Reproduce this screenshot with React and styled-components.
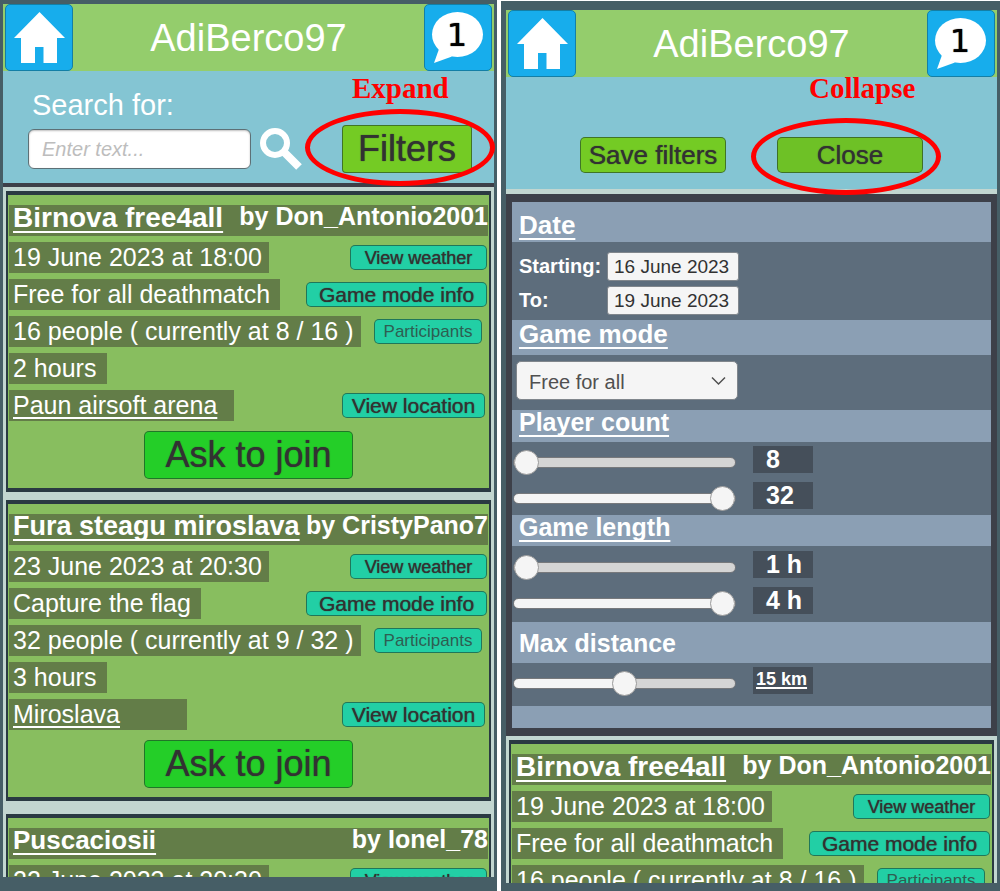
import React, { useState } from "react";
import styled, { createGlobalStyle } from "styled-components";

const GlobalStyle = createGlobalStyle`
  *, *::before, *::after { box-sizing: border-box; }
  body {
    margin: 0;
    background: #ffffff;
    font-family: "Liberation Sans", Arial, sans-serif;
    color: #ffffff;
  }
  button, input, select { font-family: inherit; margin: 0; }
`;

/* ---------- page and phone frames ---------- */

const Page = styled.main`
  display: grid;
  grid-template-columns: 497fr 499fr;
  gap: 4px;
  height: 100vh;
  overflow: hidden;
`;

const Phone = styled.section`
  display: flex;
  flex-direction: column;
  min-width: 0;
  min-height: 0;
  margin-top: ${(p) => p.$top || 0}px;
  padding: ${(p) => p.$frame};
  background: #465e66;
`;

const Header = styled.header`
  flex: none;
  display: flex;
  align-items: center;
  justify-content: space-between;
  height: 67px;
  padding: 0 2px;
  background: #94cd6c;
`;

const UserName = styled.h1`
  margin: 0;
  font-size: 38px;
  font-weight: 400;
  line-height: 44px;
`;

const IconButton = styled.button`
  width: 68px;
  height: 67px;
  padding: 0;
  border: 1px solid #137fa6;
  border-radius: 5px;
  background: #17adec;
  svg { display: block; }
`;

const Badge = styled.text`
  font-family: "DejaVu Sans", sans-serif;
  font-size: 32px;
  fill: #000000;
  text-shadow: 0 0 1px #000000;
`;

/* ---------- buttons ---------- */

const Button = styled.button`
  display: block;
  flex: none;
  width: ${(p) => p.$w}px;
  height: ${(p) => p.$h}px;
  margin-right: ${(p) => p.$inset || 0}px;
  padding: 0;
  border: 1px solid rgba(30, 60, 40, 0.6);
  border-radius: ${(p) => p.$r || 5}px;
  background: ${(p) => p.$bg};
  color: ${(p) => (p.$light ? "#2e5e52" : "#323232")};
  font-size: ${(p) => p.$size}px;
  line-height: 1;
  white-space: nowrap;
  text-shadow: ${(p) => (p.$light ? "none" : "0 0 1px currentColor")};
`;

const Callout = styled.div`
  position: relative;
  flex: none;
`;

const Ring = styled.span`
  position: absolute;
  z-index: 2;
  left: ${(p) => p.$x}px;
  top: ${(p) => p.$y}px;
  width: 190px;
  height: 77px;
  border: 5px solid #ff0000;
  border-radius: 50%;
  pointer-events: none;
`;

const Note = styled.span`
  position: absolute;
  z-index: 2;
  left: ${(p) => p.$x}px;
  top: ${(p) => p.$y}px;
  color: #ff0000;
  font: 700 29px/32px "Liberation Serif", "Times New Roman", serif;
`;

/* ---------- search and filter bars ---------- */

const SearchArea = styled.form`
  flex: none;
  padding: 18px 22px 10px 25px;
  background: #84c5d3;
`;

const SearchLabel = styled.label`
  display: block;
  margin-bottom: 4px;
  padding-left: 4px;
  font-size: 29px;
  line-height: 32px;
`;

const SearchRow = styled.div`
  display: flex;
  align-items: center;
`;

const SearchInput = styled.input`
  flex: 1;
  min-width: 0;
  height: 40px;
  padding: 0 13px;
  border: 1px solid #5d7076;
  border-radius: 6px;
  background: #ffffff;
  box-shadow: inset 0 1px 2px rgba(0, 0, 0, 0.25);
  color: #323232;
  font-size: 20px;
  &::placeholder { color: #bdbdbd; font-style: italic; opacity: 1; }
`;

const SearchButton = styled.button`
  width: 42px;
  height: 42px;
  margin: 0 40px 0 9px;
  padding: 0;
  border: 0;
  background: none;
  svg { display: block; }
`;

const FilterBar = styled.div`
  flex: none;
  display: flex;
  justify-content: center;
  gap: 51px;
  padding: 60px 0 16px;
  background: #84c5d3;
`;

const Divider = styled.div`
  flex: none;
  height: ${(p) => p.$h}px;
  background: ${(p) => p.$bg};
`;

/* ---------- game cards ---------- */

const GameList = styled.div`
  flex: 1;
  min-height: 0;
  overflow: hidden;
  padding: 4px 3px 0;
  background: #c2d6d0;
`;

const Card = styled.article`
  display: flex;
  flex-direction: column;
  gap: 6px;
  margin-bottom: ${(p) => p.$after}px;
  padding: 10px 1px 9px;
  border: solid #2a3a42;
  border-width: 4px 2px;
  background: #88be5f;
`;

const TitleBar = styled.div`
  display: flex;
  justify-content: space-between;
  height: 31px;
  padding-left: 4px;
  background: #637d48;
  font-weight: 700;
  white-space: nowrap;
`;

const Title = styled.h2`
  margin: 0;
  font-size: ${(p) => p.$size}px;
  line-height: 25px;
  text-decoration: underline 2px;
  text-underline-offset: 4px;
  text-decoration-skip-ink: none;
`;

const Host = styled.span`
  font-size: 25px;
  line-height: 23px;
`;

const Row = styled.div`
  display: flex;
  align-items: center;
  justify-content: space-between;
  height: 31px;
`;

const Line = styled.span`
  width: ${(p) => p.$w}px;
  height: 31px;
  padding-left: 4px;
  background: #637d48;
  font-size: 25px;
  line-height: 31px;
  white-space: nowrap;
  text-decoration: ${(p) => (p.$link ? "underline 2px" : "none")};
  text-underline-offset: 3px;
  text-decoration-skip-ink: none;
`;

const JoinRow = styled.div`
  display: flex;
  justify-content: center;
  padding-top: 4px;
`;

/* ---------- filter panel ---------- */

const Panel = styled.form`
  flex: none;
  border: solid #3d4049;
  border-width: 8px 6px;
  padding-bottom: 22px;
  background: #8b9fb4;
`;

const Heading = styled.h2`
  margin: 0;
  padding: ${(p) => p.$top}px 7px ${(p) => p.$bottom}px;
  font-size: ${(p) => (p.$large ? 26 : 25)}px;
  line-height: 24px;
  text-decoration: ${(p) => (p.$plain ? "none" : "underline 2px")};
  text-underline-offset: 4px;
  text-decoration-skip-ink: none;
`;

const Body = styled.div`
  display: flex;
  flex-direction: column;
  align-items: flex-start;
  gap: ${(p) => p.$gap || 7}px;
  padding: ${(p) => p.$pad};
  background: #5d6d7c;
`;

const DateRow = styled.div`
  display: grid;
  grid-template-columns: 88px 132px;
  align-items: center;
`;

const DateLabel = styled.label`
  font-size: 20px;
  font-weight: 700;
  line-height: 27px;
`;

const DateInput = styled.input`
  width: 100%;
  height: 29px;
  padding: 0 6px;
  border: 1px solid #80868c;
  border-radius: 3px;
  background: #f5f5f5;
  color: #323232;
  font-size: 19px;
`;

const SelectBox = styled.div`
  position: relative;
  width: 222px;
  svg {
    position: absolute;
    right: 12px;
    top: 15px;
    pointer-events: none;
  }
`;

const Select = styled.select`
  display: block;
  width: 100%;
  height: 39px;
  padding: 2px 12px 0;
  appearance: none;
  border: 1px solid #80868c;
  border-radius: 5px;
  background: #f5f5f5;
  color: #505050;
  font-size: 20px;
`;

const SliderRow = styled.div`
  display: flex;
  align-items: flex-start;
  gap: 17px;
  height: 29px;
`;

const Slider = styled.input.attrs({ type: "range" })`
  appearance: none;
  width: 223px;
  height: 25px;
  margin-top: 4px;
  background: none;
  &::-webkit-slider-runnable-track {
    height: 11px;
    border: 1px solid #77797c;
    border-radius: 6px;
    background: linear-gradient(
      to right,
      #f5f5f5 ${(p) => p.$fill}%,
      #d5d5d5 ${(p) => p.$fill}%
    );
  }
  &::-webkit-slider-thumb {
    appearance: none;
    width: 25px;
    height: 25px;
    margin-top: -8px;
    border: 1px solid #9a9a9a;
    border-radius: 50%;
    background: #f5f5f5;
  }
`;

const Value = styled.output`
  width: 60px;
  height: 27px;
  padding-left: ${(p) => (p.$small ? 3 : 13)}px;
  background: #454f5a;
  font-size: ${(p) => (p.$small ? 18 : 25)}px;
  font-weight: 700;
  line-height: ${(p) => (p.$small ? 25 : 27)}px;
  white-space: nowrap;
  text-decoration: ${(p) => (p.$small ? "underline 2px" : "none")};
  text-underline-offset: 2px;
`;

/* ---------- pieces ---------- */

function TopBar() {
  return (
    <Header>
      <IconButton type="button" aria-label="Home">
        <svg width="66" height="65" viewBox="1 1 66 65">
          <path
            d="M34.500 8 L60 34 H52 V59 H38.500 V43 H30 V59 H16 V34 H9 Z"
            fill="#fff"
          />
        </svg>
      </IconButton>
      <UserName>AdiBerco97</UserName>
      <IconButton type="button" aria-label="Messages">
        <svg width="66" height="65" viewBox="1 1 66 65">
          <ellipse cx="33.500" cy="30.500" rx="25.500" ry="22.500" fill="#fff" />
          <path d="M15 45 L10 59 L28 52.500 Z" fill="#fff" />
          <Badge x="33" y="42" textAnchor="middle">
            1
          </Badge>
        </svg>
      </IconButton>
    </Header>
  );
}

const TEAL = "#22cfa5";

function GameCard({ game }) {
  return (
    <Card $after={game.after}>
      <TitleBar>
        <Title $size={game.titleSize}>{game.title}</Title>
        <Host>by {game.host}</Host>
      </TitleBar>
      <Row>
        <Line $w={260}>{game.date}</Line>
        <Button type="button" $w={137} $h={25} $size={18} $bg={TEAL} $inset={1}>
          View weather
        </Button>
      </Row>
      <Row>
        <Line $w={game.modeWidth}>{game.mode}</Line>
        <Button type="button" $w={181} $h={25} $size={21} $bg={TEAL} $inset={1}>
          Game mode info
        </Button>
      </Row>
      <Row>
        <Line $w={352}>{game.people}</Line>
        <Button type="button" $w={108} $h={25} $size={17} $bg={TEAL} $inset={6} $light>
          Participants
        </Button>
      </Row>
      <Row>
        <Line $w={98}>{game.length}</Line>
      </Row>
      <Row>
        <Line $w={game.placeWidth} $link>
          {game.place}
        </Line>
        <Button type="button" $w={143} $h={25} $size={21} $bg={TEAL} $inset={3}>
          View location
        </Button>
      </Row>
      <JoinRow>
        <Button type="button" $w={209} $h={48} $size={36} $bg="#24ce28">
          Ask to join
        </Button>
      </JoinRow>
    </Card>
  );
}

function RangeRow({ label, min, max, initial, unit = "", small }) {
  const [value, setValue] = useState(initial);
  const fill = ((value - min) / (max - min)) * 100;
  return (
    <SliderRow>
      <Slider
        aria-label={label}
        min={min}
        max={max}
        value={value}
        $fill={fill}
        onChange={(e) => setValue(Number(e.target.value))}
      />
      <Value $small={small}>
        {value}
        {unit}
      </Value>
    </SliderRow>
  );
}

const games = [
  {
    title: "Birnova free4all",
    titleSize: 28,
    host: "Don_Antonio2001",
    date: "19 June 2023 at 18:00",
    mode: "Free for all deathmatch",
    modeWidth: 271,
    people: "16 people ( currently at 8 / 16 )",
    length: "2 hours",
    place: "Paun airsoft arena",
    placeWidth: 225,
    after: 8,
  },
  {
    title: "Fura steagu miroslava",
    titleSize: 27,
    host: "CristyPano7",
    date: "23 June 2023 at 20:30",
    mode: "Capture the flag",
    modeWidth: 192,
    people: "32 people ( currently at 9 / 32 )",
    length: "3 hours",
    place: "Miroslava",
    placeWidth: 178,
    after: 13,
  },
  {
    title: "Puscaciosii",
    titleSize: 26,
    host: "Ionel_78",
    date: "22 June 2023 at 20:30",
    mode: "Free for all deathmatch",
    modeWidth: 271,
    people: "16 people ( currently at 8 / 16 )",
    length: "2 hours",
    place: "Miroslava",
    placeWidth: 178,
    after: 8,
  },
];

export default function App() {
  return (
    <>
      <GlobalStyle />
      <Page>
        <Phone $frame="4px 3px 14px">
          <TopBar />
          <SearchArea onSubmit={(e) => e.preventDefault()}>
            <SearchLabel htmlFor="search">Search for:</SearchLabel>
            <SearchRow>
              <SearchInput id="search" type="text" placeholder="Enter text..." />
              <SearchButton type="submit" aria-label="Search">
                <svg width="42" height="42" viewBox="0 0 42 42" fill="none" stroke="#fff">
                  <circle cx="15" cy="15" r="12" strokeWidth="6" />
                  <path d="M24 24 L39 39" strokeWidth="8" />
                </svg>
              </SearchButton>
              <Callout>
                <Button type="button" $w={130} $h={48} $size={36} $bg="#74cb24" $r={4}>
                  Filters
                </Button>
                <Ring $x={-37} $y={-16} />
                <Note $x={10} $y={-53}>Expand</Note>
              </Callout>
            </SearchRow>
          </SearchArea>
          <Divider $h={4} $bg="#3d4049" />
          <GameList>
            {games.map((g) => (
              <GameCard key={g.title} game={g} />
            ))}
          </GameList>
        </Phone>

        <Phone $top={1} $frame="9px 3px 8px 5px">
          <TopBar />
          <FilterBar>
            <Button type="button" $w={146} $h={36} $size={26} $bg="#74cb24">
              Save filters
            </Button>
            <Callout>
              <Button type="button" $w={146} $h={36} $size={26} $bg="#6ec126">
                Close
              </Button>
              <Ring $x={-26} $y={-19} />
              <Note $x={32} $y={-65}>Collapse</Note>
            </Callout>
          </FilterBar>
          <Divider $h={5} $bg="#c2d6d0" />
          <Panel onSubmit={(e) => e.preventDefault()}>
            <Heading $top={11} $bottom={5} $large>Date</Heading>
            <Body $pad="10px 7px 5px" $gap={5}>
              <DateRow>
                <DateLabel htmlFor="from">Starting:</DateLabel>
                <DateInput id="from" type="text" defaultValue="16 June 2023" />
              </DateRow>
              <DateRow>
                <DateLabel htmlFor="to">To:</DateLabel>
                <DateInput id="to" type="text" defaultValue="19 June 2023" />
              </DateRow>
            </Body>
            <Heading $top={2} $bottom={9} $large>Game mode</Heading>
            <Body $pad="6px 4px 10px">
              <SelectBox>
                <Select aria-label="Game mode" defaultValue="ffa">
                  <option value="ffa">Free for all</option>
                  <option value="ctf">Capture the flag</option>
                </Select>
                <svg width="15" height="10" viewBox="0 0 15 10" fill="none" stroke="#505050" strokeWidth="1.500">
                  <path d="M1 1.500 L7.500 8 L14 1.500" />
                </svg>
              </SelectBox>
            </Body>
            <Heading $top={0} $bottom={8}>Player count</Heading>
            <Body $pad="4px 1px">
              <RangeRow label="Minimum players" min={8} max={32} initial={8} />
              <RangeRow label="Maximum players" min={8} max={32} initial={32} />
            </Body>
            <Heading $top={0} $bottom={7}>Game length</Heading>
            <Body $pad="5px 1px 6px">
              <RangeRow label="Minimum length" min={1} max={4} initial={1} unit=" h" />
              <RangeRow label="Maximum length" min={1} max={4} initial={4} unit=" h" />
            </Body>
            <Heading $top={9} $bottom={8} $plain>Max distance</Heading>
            <Body $pad="4px 1px 10px">
              <RangeRow label="Max distance" min={0} max={30} initial={15} unit=" km" small />
            </Body>
          </Panel>
          <GameList>
            <GameCard game={games[0]} />
          </GameList>
        </Phone>
      </Page>
    </>
  );
}
